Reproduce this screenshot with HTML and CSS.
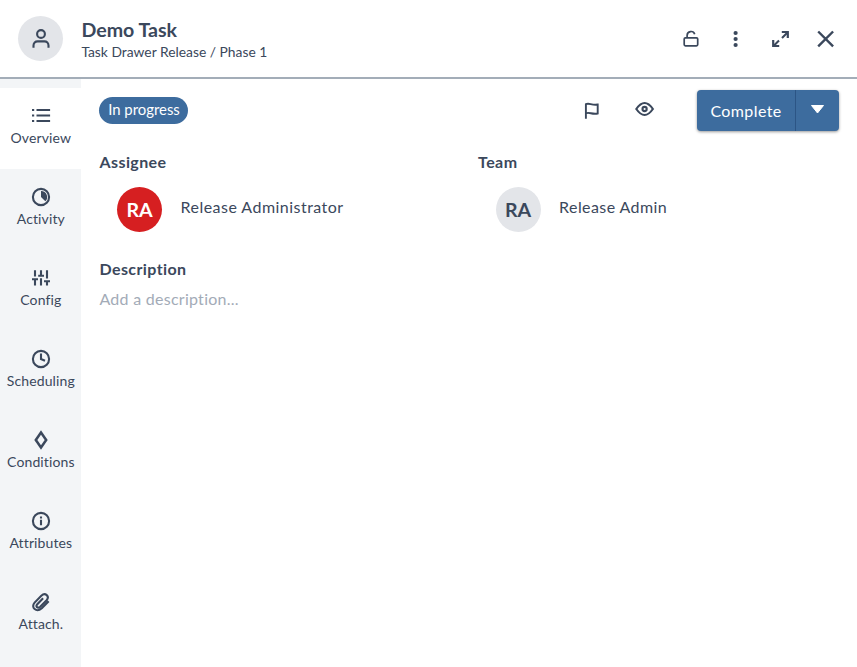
FILE: index.html
```html
<!DOCTYPE html>
<html lang="en">
<head>
<meta charset="utf-8">
<title>Demo Task</title>
<link rel="stylesheet" href="styles.css">
</head>
<body>
<header class="header">
  <div class="avatar avatar-icon">
    <svg width="22" height="22" viewBox="0 0 22 22"><circle cx="11" cy="6" r="3.9"/><path d="M3.5 19.8v-2.4a4 4 0 0 1 4-4h7a4 4 0 0 1 4 4v2.4"/></svg>
  </div>
  <div class="titles">
    <h1 class="title"><span>Demo Task</span></h1>
    <p class="subtitle"><span>Task Drawer Release / Phase 1</span></p>
  </div>
  <div class="actions">
    <svg class="thin" width="20" height="20" viewBox="0 0 20 20"><rect x="3.2" y="8.9" width="13.5" height="7.9" rx="1.2"/><path d="M6.1 8.6V6.4a3.9 3.9 0 0 1 7.6-1.2"/></svg>
    <svg class="solid" width="20" height="20" viewBox="0 0 20 20"><circle cx="9.6" cy="4" r="2.1"/><circle cx="9.6" cy="10" r="2.1"/><circle cx="9.6" cy="16" r="2.1"/></svg>
    <svg width="20" height="20" viewBox="0 0 20 20"><path d="M11 8.9l5.5-5.5M2.5 17L8 11.5"/><path d="M10.8 3h6v6M2.2 11v6h6" stroke-width="2.2"/></svg>
    <svg class="close" width="20" height="20" viewBox="0 0 20 20"><path d="M2.2 2.5l14.9 14.9M17.1 2.5L2.2 17.4"/></svg>
  </div>
</header>
<div class="body">
  <nav class="rail">
    <a class="tab active"><svg width="20" height="20" viewBox="0 0 20 20"><path d="M5.5 4h13.6M5.5 9.5h13.6M5.5 15h13.6M1 4h2.2M1 9.5h2.2M1 15h2.2"/></svg><span>Overview</span></a>
    <a class="tab"><svg width="20" height="20" viewBox="0 0 20 20"><circle cx="10" cy="10" r="8.1"/><path class="fill" d="M10 4a6 6 0 0 1 4.3 10.3L10 10z"/></svg><span>Activity</span></a>
    <a class="tab"><svg width="20" height="20" viewBox="0 0 20 20"><path d="M4 2.2v6.2M1 11.2h6M4 11v6.5M10 2.2v5M7.2 7.8h5.8M10 10.2v7.3M16 2.2v8.2M13 13.2h6M16 13v4.5"/></svg><span>Config</span></a>
    <a class="tab"><svg width="20" height="20" viewBox="0 0 20 20"><circle cx="10" cy="10" r="8.1"/><path d="M10 4.5V10l4 1.8"/></svg><span>Scheduling</span></a>
    <a class="tab"><svg width="20" height="20" viewBox="0 0 20 20"><path stroke-width="2.5" d="M10 2.5l5.2 7.5-5.2 7.5L4.8 10z"/></svg><span>Conditions</span></a>
    <a class="tab"><svg width="20" height="20" viewBox="0 0 20 20"><circle cx="10" cy="10" r="8.1"/><path d="M10 8.8v5.4M10 5.6v2"/></svg><span>Attributes</span></a>
    <a class="tab"><svg width="20" height="20" viewBox="0 0 20 20"><path d="M17.7 9.3l-6.9 7c-5.4 4.7-11.4-.8-7.2-5.7l6.7-6.9c4.1-3.6 8.6.6 5.3 4.5l-6.4 6.5c-2.6 2.2-4.9-.2-2.9-2.5l5.8-6"/></svg><span>Attach.</span></a>
  </nav>
  <main class="main">
    <div class="toolbar">
      <span class="badge"><span>In progress</span></span>
      <div class="tools">
        <svg class="flag" width="20" height="20" viewBox="0 0 20 20"><path d="M3.9 18.7V4.2c3-1.7 5.7 1.3 11.8.3v9c-5.6 1.3-8.5-1.8-11.8-.2"/></svg>
        <svg class="eye" width="20" height="20" viewBox="0 0 20 20"><path d="M1.3 10Q9.6-2 17.9 10Q9.6 22 1.3 10z"/><circle cx="9.6" cy="10" r="2.1"/></svg>
      </div>
      <div class="split">
        <button class="complete"><span>Complete</span></button>
        <button class="drop" aria-label="More"><svg width="14" height="9" viewBox="0 0 14 9"><path d="M.5 .5h12L6.5 8z"/></svg></button>
      </div>
    </div>
    <div class="people">
      <section><h2 class="label"><span>Assignee</span></h2><div class="person"><div class="avatar red"><span>RA</span></div><span class="name">Release Administrator</span></div></section>
      <section><h2 class="label"><span>Team</span></h2><div class="person"><div class="avatar"><span>RA</span></div><span class="name team">Release Admin</span></div></section>
    </div>
    <section><h2 class="label"><span>Description</span></h2><p class="placeholder"><span>Add a description...</span></p></section>
  </main>
</div>
</body>
</html>
```
FILE: styles.css
```css
* { box-sizing: border-box; }
body { margin: 0; height: 667px; overflow: hidden; display: flex; flex-direction: column; background: #fff; color: #3b485c; font-family: Lato, sans-serif; }
h1, h2, p { margin: 0; }
svg { display: block; fill: none; stroke: #3b485c; stroke-width: 2.1; flex: none; }
.thin { stroke-width: 1.7; }
.close { stroke-width: 2.4; }
.flag { stroke-width: 1.9; }
.solid, .fill { fill: #3b485c; stroke: none; }
.header { height: 79px; flex: none; display: flex; align-items: flex-start; padding: 16px 21px 0 18px; border-bottom: 2px solid #a3adb8; }
.avatar { width: 45px; height: 45px; border-radius: 50%; background: #e3e5e9; display: flex; align-items: center; justify-content: center; font-size: 19.6px; line-height: 24px; font-weight: 700; flex: none; }
.red { background: #d61f21; color: #fff; }
.titles { margin: 0 0 0 18.4px; white-space: nowrap; }
.title { font-size: 19.6px; line-height: 27px; font-weight: 700; }
.subtitle { font-size: 13.85px; line-height: 18px; }
.actions { margin: 13px 0 0 auto; display: flex; gap: 25px; }
.body { flex: 1; display: flex; min-height: 0; }
.rail { width: 81px; background: #f3f5f7; padding-top: 9px; flex: none; }
.tab { height: 81px; display: flex; flex-direction: column; align-items: center; padding-top: 18px; font-size: 14px; line-height: 20px; letter-spacing: .12px; gap: 2px; white-space: nowrap; }
.tab span { padding-left: .7px; }
.active { background: #fff; }
.main { flex: 1; padding: 11px 18px 0; }
.toolbar { height: 41px; display: flex; }
.badge { width: 89px; height: 27px; margin-top: 7px; padding-left: 1px; border-radius: 14px; background: #3d6c9e; color: #fff; font-size: 14.9px; line-height: 25px; text-align: center; white-space: nowrap; }
.tools { display: flex; gap: 33px; margin: 9px 42px 0 auto; }
.flag { margin-top: 1px; }
.split { width: 142px; height: 41px; display: flex; border-radius: 4px; background: #3d6c9e; box-shadow: 0 1px 3px #0006; }
button { border: 0; padding: 0; background: none; color: #fff; font: 16px/41px Lato, sans-serif; letter-spacing: .4px; }
.complete { width: 98px; }
.drop { flex: 1; border-left: 1px solid #2c5585; display: flex; justify-content: center; padding-top: 15px; }
.drop svg { fill: #fff; stroke: #fff; stroke-width: 1; }
.people { display: grid; grid-template-columns: 378.6px 1fr; margin-top: 21px; height: 107px; }
.label { font-size: 16px; line-height: 20px; font-weight: 700; letter-spacing: .4px; padding-left: .5px; }
.person { display: flex; margin: 15px 0 0 18px; }
.name { margin: 9px 0 0 18.5px; font-size: 16px; line-height: 22px; letter-spacing: .47px; }
.team { letter-spacing: .42px; }
.placeholder { margin-top: 9px; padding-left: .4px; font-size: 16px; line-height: 22px; letter-spacing: .27px; color: #a3abb7; }
```
